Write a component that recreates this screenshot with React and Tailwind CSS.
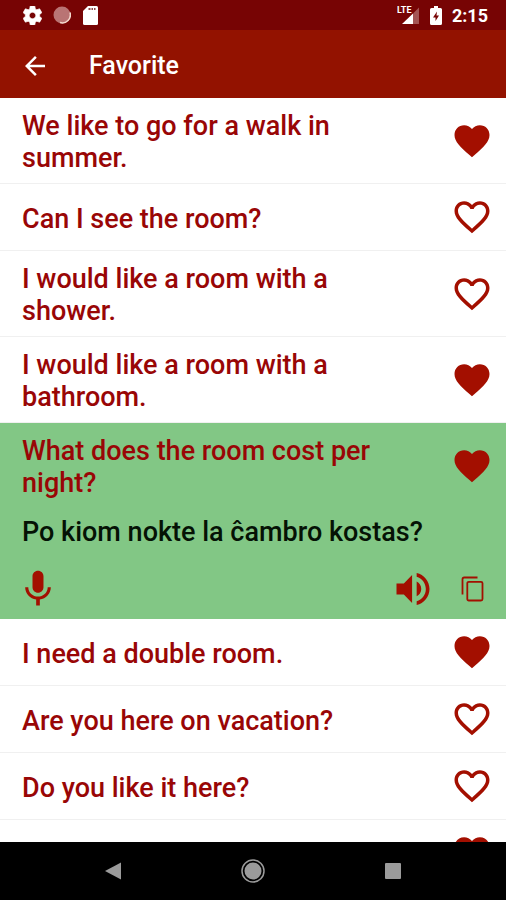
import React, { useState } from 'react';
import { MdArrowBack, MdFavorite, MdFavoriteBorder } from 'react-icons/md';

const initialPhrases = [
  { id: 1, text: 'We like to go for a walk in summer.', favorite: true },
  { id: 2, text: 'Can I see the room?', favorite: false },
  { id: 3, text: 'I would like a room with a shower.', favorite: false },
  { id: 4, text: 'I would like a room with a bathroom.', favorite: true },
  {
    id: 5,
    text: 'What does the room cost per night?',
    translation: 'Po kiom nokte la ĉambro kostas?',
    favorite: true,
  },
  { id: 6, text: 'I need a double room.', favorite: true },
  { id: 7, text: 'Are you here on vacation?', favorite: false },
  { id: 8, text: 'Do you like it here?', favorite: false },
  { id: 9, text: '', favorite: true },
];

function StatusBar() {
  return (
    <div className="h-[30px] shrink-0 bg-[#770404] flex items-center justify-between pl-[23px] pr-[18px] text-white">
      <div className="flex items-center gap-[11px]">
        <svg viewBox="2 2 20 20" fill="currentColor" stroke="currentColor" className="size-[19px]">
          <path
            strokeWidth="0.8"
            d="M19.430 12.980c.04-.32.07-.64.07-.98s-.03-.66-.07-.98l2.110-1.650c.19-.15.24-.42.12-.64l-2-3.460c-.12-.22-.39-.3-.61-.22l-2.490 1c-.52-.4-1.080-.73-1.690-.98l-.38-2.650A.488.488 0 0 0 14 2h-4c-.25 0-.46.18-.49.42l-.38 2.650c-.61.25-1.170.59-1.690.98l-2.490-1c-.23-.09-.49 0-.61.22l-2 3.460c-.13.22-.07.49.12.64l2.110 1.650c-.04.32-.07.65-.07.98s.03.66.07.98l-2.110 1.650c-.19.15-.24.42-.12.64l2 3.460c.12.22.39.3.61.22l2.490-1c.52.4 1.080.73 1.690.98l.38 2.650c.03.24.24.42.49.42h4c.25 0 .46-.18.49-.42l.38-2.650c.61-.25 1.170-.59 1.690-.98l2.490 1c.23.09.49 0 .61-.22l2-3.460c.12-.22.07-.49-.12-.64l-2.110-1.650zM12 15.500c-1.930 0-3.500-1.570-3.500-3.500s1.570-3.500 3.500-3.500 3.500 1.570 3.500 3.500-1.570 3.500-3.500 3.500z"
          />
        </svg>
        <svg viewBox="0 0 18 18" className="size-[18px]">
          <circle cx="9" cy="9" r="8.500" fill="#b97474" />
          <path d="M17 6.500a8 8 0 0 1-10 10" fill="none" stroke="#f3d9cf" strokeWidth="1.500" />
        </svg>
        <svg viewBox="0 0 15 19" className="ml-px w-[15px] h-[19px]">
          <path fill="currentColor" d="M5 0h8.500q1.500 0 1.500 1.500v16q0 1.500-1.500 1.500h-12Q0 19 0 17.500V5z" />
          <path fill="#8f4a4a" d="M5.500 2h2v2h-2zM8.500 2h1.500v2H8.500zM11 2h1.500v2H11z" />
        </svg>
      </div>
      <div className="flex items-center gap-[10px]">
        <svg viewBox="0 0 23 20" className="w-[23px] h-5">
          <path d="M22 2.500V19h-6V8.500z" fill="#a35454" />
          <path d="M16 8.500V19H5z" fill="#fff" />
          <text
            x="0"
            y="8"
            fontSize="9"
            fontWeight="700"
            fontFamily="'Liberation Sans Narrow', Roboto, sans-serif"
            fill="#fff"
          >
            LTE
          </text>
        </svg>
        <svg viewBox="0 0 12 19" className="w-3 h-[19px]">
          <path
            fillRule="evenodd"
            fill="#fff"
            d="M4 0h4v2h2.500q1.500 0 1.500 1.500v14q0 1.500-1.500 1.500h-9Q0 19 0 17.500v-14Q0 2 1.500 2H4zM7 5.500L3 11.500h2.500V15L9 9.500H6.500z"
          />
        </svg>
        <span className="text-[18px] leading-6 pt-px font-bold">2:15</span>
      </div>
    </div>
  );
}

function HeartButton({ active, onClick }) {
  return (
    <button
      type="button"
      onClick={onClick}
      aria-label={active ? 'Remove from favorites' : 'Add to favorites'}
      className="shrink-0 text-[#a30f00]"
    >
      {active ? <MdFavorite className="size-[42px]" /> : <MdFavoriteBorder className="size-[42px]" />}
    </button>
  );
}

function PhraseActions() {
  return (
    <div className="flex items-center pl-4 pr-[13px] pb-2 text-[#a30f00]">
      <button type="button" aria-label="Record">
        <svg viewBox="0 0 24 24" fill="currentColor" className="size-11">
          <path d="M12 14c1.660 0 2.990-1.340 2.990-3L15 5c0-1.660-1.340-3-3-3S9 3.340 9 5v6c0 1.660 1.340 3 3 3zm5.300-3c0 3-2.540 5.100-5.300 5.100S6.700 14 6.700 11H5c0 3.410 2.720 6.230 6 6.720V21h2v-3.280c3.280-.48 6-3.300 6-6.720h-1.700z" />
        </svg>
      </button>
      <button type="button" aria-label="Listen" className="ml-auto">
        <svg viewBox="0 0 24 24" fill="currentColor" className="size-11">
          <path d="M3 9v6h4l4.500 4.700V4.300L7 9H3zm13.500 3c0-1.770-1.020-3.290-2.500-4.030v8.050c1.480-.73 2.500-2.250 2.500-4.020zM14 3.230v2.060c2.890.86 5 3.540 5 6.710s-2.110 5.850-5 6.710v2.060c4.010-.91 7-4.490 7-8.770s-2.990-7.860-7-8.770z" />
        </svg>
      </button>
      <button type="button" aria-label="Copy" className="ml-4 w-[42px] flex justify-center">
        <svg viewBox="0 0 23 26" fill="none" stroke="currentColor" strokeWidth="1.800" className="w-[23px] h-[26px]">
          <path d="M1.500 18.500V3.200Q1.500 1.500 3.200 1.500H16.500" />
          <rect x="6.300" y="5.800" width="15.200" height="18.700" rx="1.500" />
        </svg>
      </button>
    </div>
  );
}

function PhraseRow({ phrase, onToggle }) {
  const open = Boolean(phrase.translation);

  return (
    <li className={open ? 'bg-[#82c785]' : 'border-b border-[#f0f0f0]'}>
      <div className="min-h-[66px] flex items-center justify-between pl-[22px] pr-[13px] py-[9px]">
        <p className="w-[360px] pt-[3px] text-[27px] leading-8 font-medium text-[#990606]">{phrase.text}</p>
        <HeartButton active={phrase.favorite} onClick={onToggle} />
      </div>
      {open && (
        <>
          <p className="px-[22px] pt-2 pb-[19px] text-[27px] leading-8 font-medium text-[#051205]">
            {phrase.translation}
          </p>
          <PhraseActions />
        </>
      )}
    </li>
  );
}

export default function App() {
  const [phrases, setPhrases] = useState(initialPhrases);

  const toggleFavorite = (id) => {
    setPhrases(phrases.map((p) => (p.id === id ? { ...p, favorite: !p.favorite } : p)));
  };

  return (
    <div className="h-screen flex flex-col overflow-hidden bg-white font-['Roboto',sans-serif]">
      <StatusBar />

      <header className="h-[68px] shrink-0 bg-[#931200] flex items-center pt-[3px] pl-5 text-white">
        <button type="button" aria-label="Back">
          <MdArrowBack className="size-[30px]" />
        </button>
        <h1 className="ml-[39px] text-[25px] leading-8 font-medium">Favorite</h1>
      </header>

      <ul className="flex-1 min-h-0 overflow-hidden">
        {phrases.map((phrase) => (
          <PhraseRow key={phrase.id} phrase={phrase} onToggle={() => toggleFavorite(phrase.id)} />
        ))}
      </ul>

      <nav className="h-[58px] shrink-0 bg-black flex items-center justify-center gap-[116px] text-[#9b9b9b]">
        <button type="button" aria-label="Back">
          <svg viewBox="0 0 24 24" fill="currentColor" className="size-6">
            <path d="M20 3.500v17L4 12z" />
          </svg>
        </button>
        <button type="button" aria-label="Home">
          <svg viewBox="0 0 24 24" className="size-6">
            <circle cx="12" cy="12" r="8.500" fill="currentColor" />
            <circle cx="12" cy="12" r="11" fill="none" stroke="currentColor" strokeWidth="1.500" />
          </svg>
        </button>
        <button type="button" aria-label="Recent apps">
          <svg viewBox="0 0 24 24" fill="currentColor" className="size-6">
            <rect x="4" y="4" width="16" height="16" rx="1" />
          </svg>
        </button>
      </nav>
    </div>
  );
}
